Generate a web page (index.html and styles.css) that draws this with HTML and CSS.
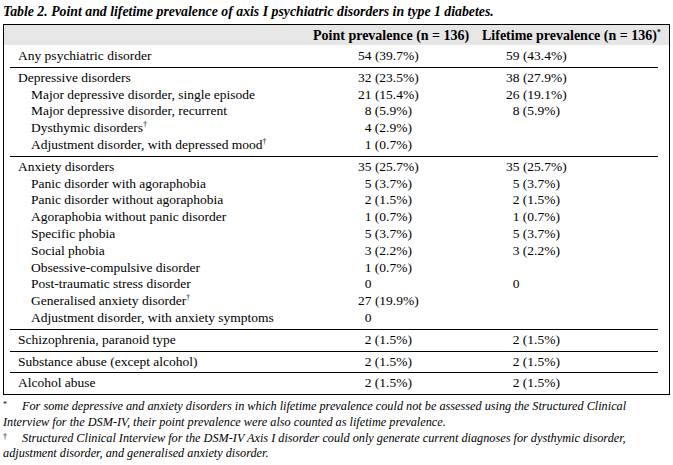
FILE: index.html
```html
<!DOCTYPE html>
<html>
<head>
<meta charset="utf-8">
<link rel="stylesheet" href="styles.css">
</head>
<body>
<div class="title">Table 2. Point and lifetime prevalence of axis I psychiatric disorders in type 1 diabetes.</div>
<div class="tbl">
  <div class="head">
    <div></div>
    <div>Point prevalence (n = 136)</div>
    <div>Lifetime prevalence (n = 136)<sup>*</sup></div>
  </div>
  <div class="group first">
    <div class="row"><div class="lab">Any psychiatric disorder</div><div>54 (39.7%)</div><div>59 (43.4%)</div></div>
  </div>
  <div class="group">
    <div class="row"><div class="lab">Depressive disorders</div><div>32 (23.5%)</div><div>38 (27.9%)</div></div>
    <div class="row"><div class="lab sub">Major depressive disorder, single episode</div><div>21 (15.4%)</div><div>26 (19.1%)</div></div>
    <div class="row"><div class="lab sub">Major depressive disorder, recurrent</div><div><span class="pad"></span>8 (5.9%)</div><div><span class="pad"></span>8 (5.9%)</div></div>
    <div class="row"><div class="lab sub">Dysthymic disorders<sup>†</sup></div><div><span class="pad"></span>4 (2.9%)</div><div></div></div>
    <div class="row"><div class="lab sub">Adjustment disorder, with depressed mood<sup>†</sup></div><div><span class="pad"></span>1 (0.7%)</div><div></div></div>
  </div>
  <div class="group">
    <div class="row"><div class="lab">Anxiety disorders</div><div>35 (25.7%)</div><div>35 (25.7%)</div></div>
    <div class="row"><div class="lab sub">Panic disorder with agoraphobia</div><div><span class="pad"></span>5 (3.7%)</div><div><span class="pad"></span>5 (3.7%)</div></div>
    <div class="row"><div class="lab sub">Panic disorder without agoraphobia</div><div><span class="pad"></span>2 (1.5%)</div><div><span class="pad"></span>2 (1.5%)</div></div>
    <div class="row"><div class="lab sub">Agoraphobia without panic disorder</div><div><span class="pad"></span>1 (0.7%)</div><div><span class="pad"></span>1 (0.7%)</div></div>
    <div class="row"><div class="lab sub">Specific phobia</div><div><span class="pad"></span>5 (3.7%)</div><div><span class="pad"></span>5 (3.7%)</div></div>
    <div class="row"><div class="lab sub">Social phobia</div><div><span class="pad"></span>3 (2.2%)</div><div><span class="pad"></span>3 (2.2%)</div></div>
    <div class="row"><div class="lab sub">Obsessive-compulsive disorder</div><div><span class="pad"></span>1 (0.7%)</div><div></div></div>
    <div class="row"><div class="lab sub">Post-traumatic stress disorder</div><div><span class="pad"></span>0</div><div><span class="pad"></span>0</div></div>
    <div class="row"><div class="lab sub">Generalised anxiety disorder<sup>†</sup></div><div>27 (19.9%)</div><div></div></div>
    <div class="row"><div class="lab sub">Adjustment disorder, with anxiety symptoms</div><div><span class="pad"></span>0</div><div></div></div>
  </div>
  <div class="group">
    <div class="row"><div class="lab">Schizophrenia, paranoid type</div><div><span class="pad"></span>2 (1.5%)</div><div><span class="pad"></span>2 (1.5%)</div></div>
  </div>
  <div class="group">
    <div class="row"><div class="lab">Substance abuse (except alcohol)</div><div><span class="pad"></span>2 (1.5%)</div><div><span class="pad"></span>2 (1.5%)</div></div>
  </div>
  <div class="group">
    <div class="row"><div class="lab">Alcohol abuse</div><div><span class="pad"></span>2 (1.5%)</div><div><span class="pad"></span>2 (1.5%)</div></div>
  </div>
</div>
<div class="notes">
  <p><span class="mark">*</span>For some depressive and anxiety disorders in which lifetime prevalence could not be assessed using the Structured Clinical Interview for the DSM-IV, their point prevalence were also counted as lifetime prevalence.</p>
  <p><span class="mark">†</span>Structured Clinical Interview for the DSM-IV Axis I disorder could only generate current diagnoses for dysthymic disorder, adjustment disorder, and generalised anxiety disorder.</p>
</div>
</body>
</html>
```
FILE: styles.css
```css
html, body {
  margin: 0;
  background: #fff;
}
body {
  padding: 3px 0 0 3px;
  font-family: "Liberation Serif", "Times New Roman", serif;
  font-size: 13.5px;
  color: #000;
}
.title {
  font-weight: bold;
  font-style: italic;
  font-size: 13.8px;
  line-height: 17px;
  margin-bottom: 4px;
}
.tbl {
  width: 665px;
  border: 1px solid #000;
}
.head {
  display: grid;
  grid-template-columns: 309px 169px 1fr;
  background: #e6e6e6;
  font-weight: bold;
  font-size: 14px;
  height: 20px;
  line-height: 22px;
  white-space: nowrap;
}
.group {
  margin: 0 11px 0 6px;
  border-top: 1px solid #000;
  padding: 2px 0 2px;
}
.group.first {
  border-top: none;
  padding-top: 3px;
}
.row {
  display: grid;
  grid-template-columns: 348px 148px 1fr;
  line-height: 16.8px;
  white-space: nowrap;
}
.lab {
  padding-left: 8px;
}
.lab.sub {
  padding-left: 21px;
}
.pad {
  display: inline-block;
  width: 6.7px;
}
sup {
  font-size: 7.5px;
  line-height: 0;
  vertical-align: 5px;
}
.notes {
  width: 666px;
  font-style: italic;
  font-size: 12.25px;
  line-height: 15.7px;
  margin-top: 4px;
}
.notes p {
  margin: 0;
}
.mark {
  display: inline-block;
  width: 19px;
  font-size: 8px;
  vertical-align: top;
  line-height: 11px;
  font-style: normal;
}
```
